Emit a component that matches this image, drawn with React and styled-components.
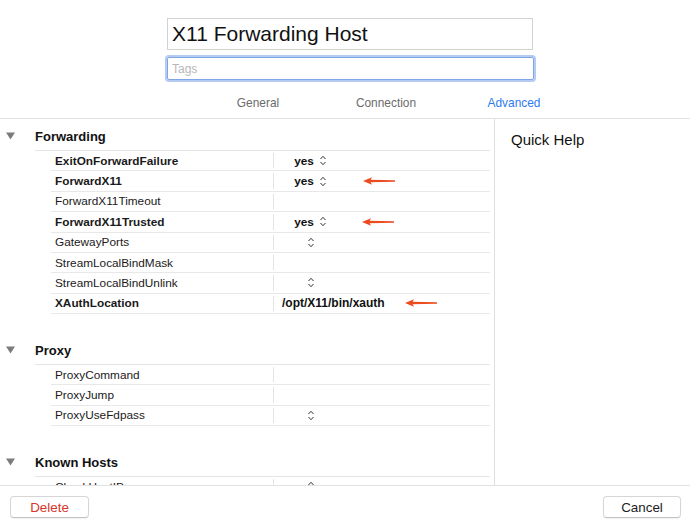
import React from 'react';
import styled, { createGlobalStyle } from 'styled-components';

const GlobalStyle = createGlobalStyle`
  html, body {
    margin: 0;
    padding: 0;
    background: #fff;
  }
  body {
    font-family: "Liberation Sans", Arial, sans-serif;
    color: #1d1d1d;
  }
  * { box-sizing: border-box; }
`;

const Window = styled.div`
  width: 690px;
  height: 523px;
  display: flex;
  flex-direction: column;
  background: #fff;
  overflow: hidden;
`;

const Top = styled.div`
  height: 118px;
  padding-top: 18px;
  display: flex;
  flex-direction: column;
`;

const TitleField = styled.div`
  margin-left: 167px;
  width: 366px;
  height: 32px;
  border: 1px solid #d2d2d2;
  padding-left: 4px;
  display: flex;
  align-items: center;
  font-size: 21px;
  color: #111;
`;

const TagsField = styled.div`
  margin-left: 167px;
  margin-top: 7px;
  width: 367px;
  height: 23px;
  border: 1px solid #7ea5e6;
  border-radius: 2px;
  box-shadow: 0 0 0 2px rgba(120, 160, 235, 0.55);
  padding-left: 4px;
  display: flex;
  align-items: center;
  font-size: 12px;
  color: #b8b8b8;
`;

const Tabs = styled.div`
  margin-left: 194px;
  height: 38px;
  padding-top: 8px;
  display: grid;
  grid-template-columns: repeat(3, 128px);
  align-items: center;
`;

const Tab = styled.div`
  text-align: center;
  font-size: 11.9px;
  color: ${p => (p.$active ? '#2e7bf0' : '#6b6b6b')};
`;

const Main = styled.div`
  height: 368px;
  display: flex;
  border-top: 1px solid #e2e2e2;
  border-bottom: 1px solid #e2e2e2;
`;

const LeftPanel = styled.div`
  width: 495px;
  border-right: 1px solid #dedede;
  overflow: hidden;
  padding-top: 3px;
`;

const RightPanel = styled.div`
  flex: 1;
  padding: 12px 0 0 16px;
`;

const HelpTitle = styled.div`
  font-size: 15px;
  line-height: 18px;
  color: #111;
`;

const Section = styled.div`
  & + & {
    margin-top: 22px;
  }
`;

const SectionHead = styled.div`
  display: flex;
  height: 29px;
`;

const Disclosure = styled.div`
  width: 35px;
  display: flex;
  align-items: center;
  padding-left: 6px;
  padding-bottom: 1px;
`;

const HeadTitle = styled.div`
  flex: 1;
  margin-right: 4px;
  border-bottom: 1px solid #e4e4e4;
  display: flex;
  align-items: center;
  font-size: 13px;
  font-weight: 700;
  color: #111;
`;

const Row = styled.div`
  position: relative;
  margin-left: 51px;
  margin-right: 4px;
  height: 20.375px;
  border-bottom: 1px solid #e8e8e8;
  display: flex;
  align-items: stretch;
`;

const Label = styled.div`
  width: 222px;
  padding-left: 4px;
  display: flex;
  align-items: center;
  font-size: 11.8px;
  font-weight: ${p => (p.$bold ? 700 : 400)};
  color: #1a1a1a;
  white-space: nowrap;
`;

const ValueCell = styled.div`
  flex: 1;
  margin: 2px 0;
  border-left: 1px solid #e3e3e3;
  display: flex;
  align-items: center;
`;

const Popup = styled.div`
  width: 73px;
  display: flex;
  justify-content: center;
  align-items: center;
  gap: 5px;
  font-size: 11.8px;
  font-weight: 700;
  color: #111;
`;

const TextValue = styled.div`
  padding-left: 8px;
  font-size: 12px;
  font-weight: 700;
  color: #111;
`;

const ArrowMark = styled.svg`
  position: absolute;
  top: 50%;
  margin-top: -4px;
  left: ${p => p.$x - 51}px;
`;

const Bottom = styled.div`
  flex: 1;
  display: flex;
  justify-content: space-between;
  align-items: flex-start;
  padding: 10px 9px 0 10px;
`;

const Button = styled.button`
  width: ${p => p.$w}px;
  height: 22px;
  border: 1px solid #d6d6d6;
  border-bottom-color: #c4c4c4;
  border-radius: 4px;
  background: #fff;
  box-shadow: 0 1px 1px rgba(0, 0, 0, 0.06);
  font-family: "Liberation Sans", Arial, sans-serif;
  font-size: 13.4px;
  color: ${p => (p.$danger ? '#d6352a' : '#1d1d1d')};
  padding: 0;
`;

const Triangle = () => (
  <svg width="9" height="8" viewBox="0 0 9 8">
    <polygon points="0,0.5 9,0.5 4.5,7.5" fill="#7c7c7c" />
  </svg>
);

const UpDown = () => (
  <svg width="8" height="11" viewBox="0 0 8 11">
    <polyline points="1.5,4 4,1.3 6.5,4" fill="none" stroke="#333" strokeWidth="1" />
    <polyline points="1.5,7 4,9.7 6.5,7" fill="none" stroke="#333" strokeWidth="1" />
  </svg>
);

// red annotation arrows drawn over the table
const Arrow = ({ x }) => (
  <ArrowMark $x={x} width="32" height="8" viewBox="0 0 32 8">
    <polygon points="0,4 9,0.3 7,4 9,7.7" fill="#ee4a1f" />
    <polygon points="6,2.7 32,3.2 32,4.8 6,5.3" fill="#ee4a1f" />
  </ArrowMark>
);

const sections = [
  {
    title: 'Forwarding',
    rows: [
      { name: 'ExitOnForwardFailure', bold: true, popup: 'yes' },
      { name: 'ForwardX11', bold: true, popup: 'yes', arrow: 363 },
      { name: 'ForwardX11Timeout' },
      { name: 'ForwardX11Trusted', bold: true, popup: 'yes', arrow: 362 },
      { name: 'GatewayPorts', popup: '' },
      { name: 'StreamLocalBindMask' },
      { name: 'StreamLocalBindUnlink', popup: '' },
      { name: 'XAuthLocation', bold: true, text: '/opt/X11/bin/xauth', arrow: 405 },
    ],
  },
  {
    title: 'Proxy',
    rows: [
      { name: 'ProxyCommand' },
      { name: 'ProxyJump' },
      { name: 'ProxyUseFdpass', popup: '' },
    ],
  },
  {
    title: 'Known Hosts',
    rows: [{ name: 'CheckHostIP', popup: '' }],
  },
];

const App = () => {
  return (
    <>
      <GlobalStyle />
      <Window>
        <Top>
          <TitleField>X11 Forwarding Host</TitleField>
          <TagsField>Tags</TagsField>
          <Tabs>
            <Tab>General</Tab>
            <Tab>Connection</Tab>
            <Tab $active>Advanced</Tab>
          </Tabs>
        </Top>

        <Main>
          <LeftPanel>
            {sections.map(sec => (
              <Section key={sec.title}>
                <SectionHead>
                  <Disclosure>
                    <Triangle />
                  </Disclosure>
                  <HeadTitle>{sec.title}</HeadTitle>
                </SectionHead>
                {sec.rows.map(r => (
                  <Row key={r.name}>
                    <Label $bold={r.bold}>{r.name}</Label>
                    <ValueCell>
                      {r.popup !== undefined && (
                        <Popup>
                          {r.popup && <span>{r.popup}</span>}
                          <UpDown />
                        </Popup>
                      )}
                      {r.text && <TextValue>{r.text}</TextValue>}
                    </ValueCell>
                    {r.arrow && <Arrow x={r.arrow} />}
                  </Row>
                ))}
              </Section>
            ))}
          </LeftPanel>
          <RightPanel>
            <HelpTitle>Quick Help</HelpTitle>
          </RightPanel>
        </Main>

        <Bottom>
          <Button $danger $w={79}>Delete</Button>
          <Button $w={78}>Cancel</Button>
        </Bottom>
      </Window>
    </>
  );
};

export default App;
